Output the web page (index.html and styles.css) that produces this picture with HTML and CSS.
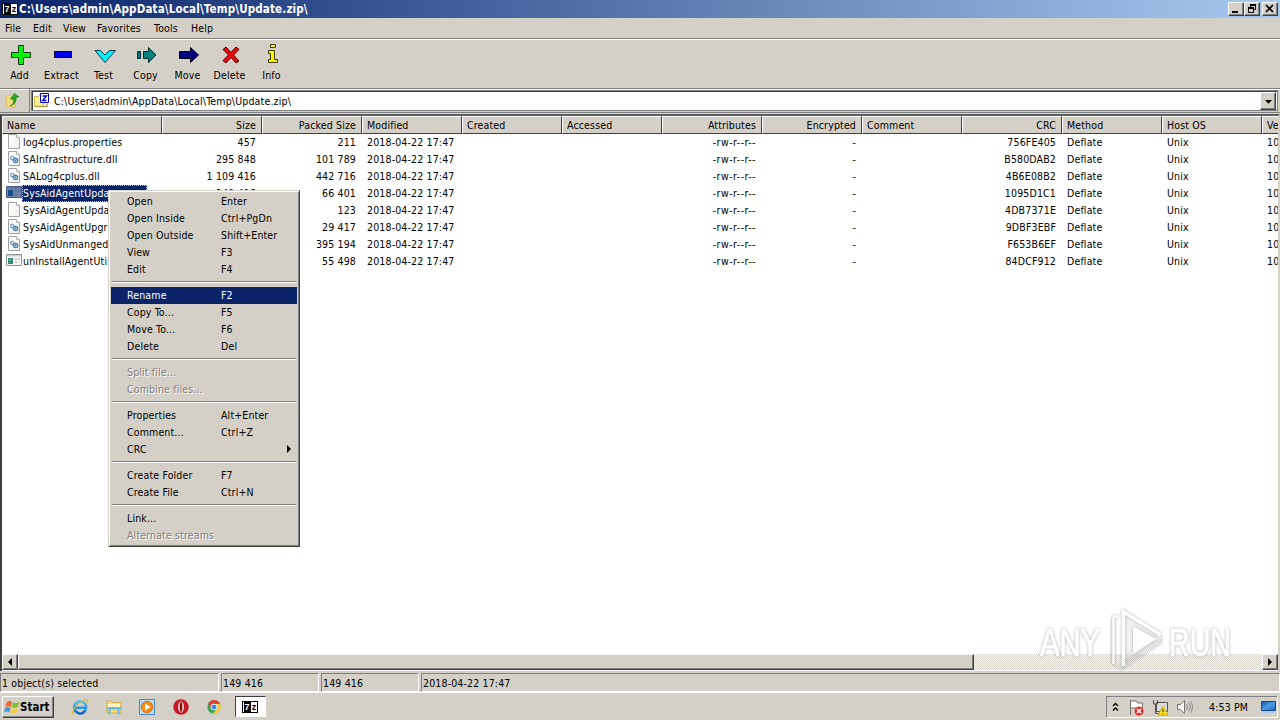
FILE: index.html
```html
<!DOCTYPE html>
<html lang="en">
<head>
<meta charset="utf-8">
<title>C:\Users\admin\AppData\Local\Temp\Update.zip\</title>
<link rel="stylesheet" href="styles.css">
</head>
<body>
<svg class="defs" width="0" height="0" aria-hidden="true">
  <defs>
    <linearGradient id="page" x1="0" y1="0" x2="1" y2="1"><stop offset="0" stop-color="#fff"/><stop offset="1" stop-color="#f0efe8"/></linearGradient>
    <linearGradient id="ie" x1="0" y1="0" x2="0" y2="1"><stop offset="0" stop-color="#55c3f5"/><stop offset="1" stop-color="#1268c4"/></linearGradient>
    <linearGradient id="desk" x1="0" y1="0" x2="1" y2="1"><stop offset="0" stop-color="#0f4fa8"/><stop offset=".5" stop-color="#4d9de6"/><stop offset="1" stop-color="#1b62bb"/></linearGradient>
    <symbol id="i-file" viewBox="0 0 16 16"><path d="M2.500.5h8l3 3v11h-11z" fill="url(#page)" stroke="#a4a4a2"/><path d="M10.500.5v3h3" fill="#fff" stroke="#b4b4b2"/></symbol>
    <symbol id="i-dll" viewBox="0 0 16 16"><path d="M2.500.5h8l3 3v11h-11z" fill="url(#page)" stroke="#9ca0a8"/><path d="M10.500.5v3h3" fill="#fff" stroke="#b4b4b2"/><circle cx="6.300" cy="7" r="1.800" fill="#dcecf8" stroke="#5c8ab6"/><circle cx="9.500" cy="9.500" r="2.200" fill="#c5def2" stroke="#4273a6" stroke-width="1.200"/><circle cx="9.500" cy="9.500" r=".7" fill="#285c91"/></symbol>
    <symbol id="i-exe" viewBox="0 0 16 16"><path d="M.5 1.500h15v11H.5z" fill="#f7f7f5" stroke="#8c9494"/><path d="M1 2h14v1.500H1z" fill="#cbd0d0"/><path d="M2 5h5v6H2z" fill="#368777"/><path d="M3 6h2v2H3z" fill="#6eb2a6"/><path d="M9 6h2M12 6h2M9 9h2" stroke="#9aa0a0"/></symbol>
    <symbol id="i-exe-sel" viewBox="0 0 16 16"><path d="M.5 1.500h15v11H.5z" fill="#7382a7" stroke="#4c5b82"/><path d="M1 2h14v1.500H1z" fill="#647396"/><path d="M2 5h5v6H2z" fill="#14518a"/><path d="M9 6h2M12 6h2M9 9h2" stroke="#455b91"/></symbol>
  </defs>
</svg>

<div class="window">
  <header class="titlebar">
    <span class="app-logo"><i>7</i>z</span>
    <h1 class="title">C:\Users\admin\AppData\Local\Temp\Update.zip\</h1>
    <div class="captions">
      <span class="cap"><svg width="14" height="12"><path d="M3 9h6" stroke="#000" stroke-width="2"/></svg></span>
      <span class="cap"><svg width="14" height="12"><path d="M5 2h6M3 5h6" stroke="#000" stroke-width="2"/><path d="M5.500 2v3M10.500 2v4.500H9M3.500 5v4.500h5V5" fill="none" stroke="#000"/></svg></span>
      <span class="cap cap-close"><svg width="14" height="12"><path d="M3 2l7 7M10 2L3 9" stroke="#000" stroke-width="1.700"/></svg></span>
    </div>
  </header>

  <nav class="menubar"><span class="m1">File</span><span class="m2">Edit</span><span class="m3">View</span><span class="m4">Favorites</span><span class="m5">Tools</span><span class="m6">Help</span></nav>

  <div class="toolbar">
    <div class="tool"><svg width="24" height="24"><path d="M9.500 2.500h5v7h7v5h-7v7h-5v-7h-7v-5h7z" fill="#00f800" stroke="#103810"/></svg><span>Add</span></div>
    <div class="tool"><svg width="24" height="24"><path d="M3.500 8.500h17v6h-17z" fill="#0000f0" stroke="#000030"/></svg><span>Extract</span></div>
    <div class="tool"><svg width="24" height="24"><path d="M2 7.500h5.500L12 12l4.500-4.500h6L12 19.500z" fill="#00f4ff" stroke="#063c4c"/></svg><span>Test</span></div>
    <div class="tool"><svg width="24" height="24"><path d="M2.500 8.500h3v7h-3zM8.500 8.500h5v-4l7.500 7.500-7.500 7.500v-4h-5z" fill="#008080" stroke="#002c2c"/></svg><span>Copy</span></div>
    <div class="tool"><svg width="24" height="24"><path d="M2.500 8.500h11v-4L21.500 12l-8 7.500v-4h-11z" fill="#000080" stroke="#000018"/></svg><span>Move</span></div>
    <div class="tool"><svg width="24" height="24"><path d="M4 6.500L7 4l5 5.500L17 4l3 2.500-5.500 5.500 5.500 6-3 2-5-5.500L7 20l-3-2.500L9.500 12z" fill="#f50808" stroke="#400"/></svg><span>Delete</span></div>
    <div class="tool"><svg width="24" height="24"><path d="M9.500 1.500h5v3h-5zM7.500 7.500h6v9h3v3h-9v-3h2v-6h-2z" fill="#fff200" stroke="#3c3800"/></svg><span>Info</span></div>
  </div>

  <div class="address">
    <span class="up"><svg width="16" height="16"><path d="M1 4l5-1 1 2 3 1v9l-8 1z" fill="#f4dc80" stroke="#d9bf6b"/><path d="M5 14c3-1 4-4 3.500-7H5.500L9.500 1.500 14 5h-3c.5 5-2 8-6 9z" fill="#34aa22" stroke="#187a16" stroke-width=".7"/></svg></span>
    <div class="combo">
      <svg width="18" height="18"><path d="M1.500 4.500h4l1-2h4v12h-9z" fill="#f6f08a" stroke="#c9bd5c"/><path d="M2 14.500h12v-3" fill="none" stroke="#b2a44a" stroke-width="1.500"/><path d="M7.500 1.500h8v9h-8z" fill="#fff" stroke="#0000a8"/><path d="M9.500 4h4l-4 4.500h4" fill="none" stroke="#0000c8" stroke-width="1.300"/></svg>
      <span class="path">C:\Users\admin\AppData\Local\Temp\Update.zip\</span>
      <span class="drop"><svg width="9" height="6"><path d="M1 1h7L4.500 4.800z"/></svg></span>
    </div>
  </div>

  <main class="list">
    <div class="grid head" id="head"></div>
    <div class="rows" id="rows"></div>
    <div class="scroll">
      <span class="sbtn"><svg width="6" height="8"><path d="M5 0v8L1 4z"/></svg></span>
      <span class="thumb"></span><span class="track"></span>
      <span class="sbtn"><svg width="6" height="8"><path d="M1 0v8l4-4z"/></svg></span>
    </div>
  </main>

  <footer class="status"><span class="s1">1 object(s) selected</span><span class="s2">149 416</span><span class="s3">149 416</span><span class="s4">2018-04-22 17:47</span></footer>
</div>

<div class="taskbar">
  <span class="start"><svg width="17" height="18" viewBox="0 0 19 18"><path d="M3 4c2-2 4-2 6-.5L7.500 9C5.500 7.500 3.500 8 1.500 9z" fill="#ed6a32"/><path d="M10 4c2 1.200 4 1 7-.5L15.500 9c-2.500 1.200-4.500 1.200-7 0z" fill="#83bd3c"/><path d="M1.300 10c2-1.200 4-1.200 6 0L6 15c-2-1.300-4-1-6 0z" fill="#4597db"/><path d="M8.300 10c2.500 1.200 4.500 1 7 0L14 15c-2.500 1.200-4.500 1-7 0z" fill="#fac936"/></svg><b>Start</b></span>
  <div class="launch">
    <svg width="18" height="18"><path d="M14.800 11.500A6 6 0 1 1 15 8v1.800H4.500" fill="none" stroke="url(#ie)" stroke-width="2.600"/><path d="M2.500 16.500C-2 14 10 1 16 1.500c1.500.3 1 2-.5 4" fill="none" stroke="#e7b52b" stroke-width="1.200"/></svg>
    <svg width="18" height="18"><path d="M2 3h5l1 1.500h8V15H2z" fill="#f5db78" stroke="#d3b24d"/><path d="M3 6h12v4H3z" fill="#fff6c4"/><path d="M4.500 16.500v-6h9v6M2 10h14" fill="none" stroke="#66b9e8" stroke-width="2"/></svg>
    <svg width="18" height="18"><path d="M1.500 1.500h15v15h-15z" fill="#b8d9f3" stroke="#4a8cc8"/><circle cx="9" cy="9" r="5.700" fill="#f28a1a" stroke="#d87212"/><path d="M7 5.500v7l5.500-3.500z" fill="#fff"/></svg>
    <svg width="18" height="18"><circle cx="9" cy="9" r="7.700" fill="#c51925"/><path d="M3 4a7.700 7.700 0 0 1 12 0" fill="none" stroke="#e96d6d"/><ellipse cx="9" cy="9" rx="2.800" ry="5.500" fill="#fff"/><ellipse cx="9" cy="9" rx="1.400" ry="5" fill="#8f0e18"/></svg>
    <svg width="18" height="18"><circle cx="9" cy="9" r="6.600" fill="#37a854"/><path d="M3.200 5.500A6.600 6.600 0 0 1 15 6H9L6 11z" fill="#df4235"/><path d="M15 6A6.600 6.600 0 0 1 8 15.600l4-5.100L11 6z" fill="#f7cb3a"/><circle cx="9" cy="9" r="3.300" fill="#fff"/><circle cx="9" cy="9" r="2.500" fill="#3f83e8"/></svg>
  </div>
  <span class="task"><span class="app-logo"><i>7</i>z</span></span>
  <div class="tray">
    <svg class="chev" width="7" height="10"><path d="M1 4l2.500-2.500L6 4M1 8.500L3.500 6 6 8.500" fill="none" stroke="#000" stroke-width="1.300"/></svg>
    <svg class="flag" width="17" height="17"><path d="M2.500 1v15M2.500 2h6l1 2h5v6H9l-1-1H2.500" fill="#fff" stroke="#74706a"/><circle cx="11" cy="12" r="4.500" fill="#e0312c"/><path d="M9 10l4 4m0-4l-4 4" stroke="#fff" stroke-width="1.600"/></svg>
    <svg class="net" width="17" height="17"><path d="M4.500 3.500h11v9h-11z" fill="#d9dcdc" stroke="#55534f"/><path d="M1.500 1v4h4V1M3.500 5v9.500H9" fill="none" stroke="#55534f"/><path d="M11 7l5 9H6z" fill="#ffe51d" stroke="#b59b00" stroke-width=".7"/><path d="M11 10v3M11 14v1" stroke="#222"/></svg>
    <svg class="vol" width="17" height="17"><path d="M1.500 5.500h3l4-4v13l-4-4h-3z" fill="#fff" stroke="#77736e"/><path d="M10.500 5q2 3 0 6M12.500 3.500q3.500 4.500 0 9M14.500 2q4 6 0 12" fill="none" stroke="#8d8984"/></svg>
    <time>4:53 PM</time>
    <svg class="desk" width="16" height="14"><path d="M.5 1.500h14v9H.5z" fill="url(#desk)" stroke="#17488d"/><path d="M1 12h13" stroke="#adc8e8" stroke-width="2"/></svg>
  </div>
</div>

<div class="context" id="context"></div>

<svg class="watermark" width="204" height="72" viewBox="0 0 204 72">
  <path d="M73 13l6-3v52l-6-4zM85 3l41 26v7L85 64z" fill="#999" fill-opacity=".16"/>
  <path d="M77 61l45-29 4 2v4L85 66z" fill="#aaa" fill-opacity=".25"/>
  <g class="glow">
    <path d="M81 10.500h-4.500V58" fill="none" stroke="#fff" stroke-width="2.500"/>
    <path d="M86.500 60V6L124 29" fill="none" stroke="#fff" stroke-width="3.500"/>
    <path d="M96 20l23 13-23 15z" fill="#fff"/>
    <text class="wm" x="3" y="50" textLength="60" lengthAdjust="spacingAndGlyphs">ANY</text>
    <text class="wm" x="132" y="50" textLength="62" lengthAdjust="spacingAndGlyphs">RUN</text>
  </g>
</svg>
<script src="app.js"></script>
</body>
</html>
```
FILE: styles.css
```css
* { box-sizing: border-box; }
body { margin: 0; width: 1280px; height: 720px; overflow: hidden; display: flex; flex-direction: column; background: #d4d0c8; color: #000; font: 10.5px/17px "DejaVu Sans Condensed", "DejaVu Sans", sans-serif; font-stretch: condensed; letter-spacing: .15px; white-space: pre; }
svg { display: block; flex: none; }
.defs { position: absolute; }
.window { height: 692px; display: flex; flex-direction: column; }
.titlebar { height: 18px; flex: none; display: flex; align-items: center; padding: 0 2px; background: linear-gradient(90deg, #0a246a, #a6caf0); }
.app-logo { display: flex; justify-content: center; width: 16px; height: 12px; border: 1px solid #000; background: #fff; color: #000; font: bold 9px/10px "Liberation Sans", sans-serif; }
.app-logo i { width: 7px; margin-right: 1px; background: #000; color: #fff; font-style: normal; text-align: center; }
.title { margin: 0 auto 0 1px; color: #fff; font-size: 11.5px; line-height: 17px; font-weight: bold; letter-spacing: .16px; }
.captions { display: flex; }
.cap { width: 16px; height: 14px; background: #d4d0c8; border: 1px solid; border-color: #fff #404040 #404040 #fff; box-shadow: inset -1px -1px #808080; }
.cap-close { margin-left: 2px; }
.menubar { height: 21px; flex: none; display: flex; padding: 2px 5px; border-bottom: 1px solid #808080; }
.m1 { width: 28px; } .m2 { width: 30px; } .m3 { width: 34px; } .m4 { width: 57px; } .m5 { width: 37px; }
.toolbar { height: 49px; flex: none; display: flex; padding-top: 3px; border-top: 1px solid #fff; }
.tool { width: 42px; display: flex; flex-direction: column; align-items: center; line-height: 16px; }
.tool span { margin-right: 3px; }
.address { height: 25px; flex: none; display: flex; border-top: 1px solid #808080; border-bottom: 1px solid #808080; box-shadow: inset 0 1px #fff; }
.up { width: 30px; padding: 3px 5px; border-right: 1px solid #808080; }
.combo { flex: 1; margin: 1px 2px 1px 1px; border: 1px solid #808080; box-shadow: inset 1px 1px #404040; background: #fff; display: flex; align-items: center; padding-left: 1px; }
.path { margin: 2px auto 0 3px; letter-spacing: .17px; }
.drop { width: 16px; height: 18px; margin-right: 1px; background: #d4d0c8; border: 1px solid; border-color: #fff #404040 #404040 #fff; box-shadow: inset -1px -1px #808080; padding: 6px 3px; }
.list { height: 557px; margin-top: 1px; flex: none; display: flex; flex-direction: column; background: #fff; border: solid #404040; border-width: 2px 2px 0 2px; border-top-color: #606060; border-right-color: #d4d0c8; overflow: hidden; }
.grid { display: grid; grid-template-columns: 160px repeat(12, 100px); width: 1360px; }
.head { height: 17px; flex: none; }
.head span { background: #d4d0c8; border: 1px solid; border-color: #fff #404040 #404040 #fff; padding: 0 5px 0 4px; line-height: 16px; }
.rows { flex: 1; padding-top: 1px; }
.rows .grid { height: 17px; }
.rows .grid > span { padding: 0 6px 0 5px; }
.rows .grid > span:nth-child(7) { letter-spacing: .48px; }
.grid .num { text-align: right; }
.rows .name { display: flex; padding: 0 0 0 4px !important; }
.name b { font-weight: normal; padding: 0 1px; }
.selected .name b { width: 125px; background: #0a246a; color: #fff; outline: 1px dotted #d8c078; outline-offset: -1px; }
.scroll { height: 16px; margin-bottom: 1px; flex: none; display: flex; }
.sbtn, .thumb { background: #d4d0c8; border: 1px solid; border-color: #fff #404040 #404040 #fff; box-shadow: inset -1px -1px #808080; }
.sbtn { width: 16px; padding: 3px 4px; }
.thumb { width: 956px; }
.track { flex: 1; background: repeating-conic-gradient(#fff 0 25%, #d4d0c8 0 50%) 0 0 / 2px 2px; }
.status { margin-top: 2px; height: 19px; flex: none; display: flex; gap: 2px; line-height: 18px; }
.status span { border: 1px solid; border-color: #808080 #fff #fff #808080; padding-left: 1px; }
.s1 { width: 219px; } .s2, .s3 { width: 98px; } .s4 { flex: 1; }
.taskbar { height: 28px; flex: none; border-top: 1px solid #fff; display: flex; padding-top: 3px; }
.start { width: 52px; height: 22px; margin-left: 2px; display: flex; align-items: center; border: 1px solid; border-color: #fff #404040 #404040 #fff; box-shadow: inset -1px -1px #808080; padding-left: 1px; }
.start b { font-size: 11.5px; letter-spacing: 0; margin-left: -1px; }
.launch { display: flex; gap: 15.5px; margin: 2px 11px 0 17px; }
.task { width: 31px; height: 21px; margin-left: 1px; background: #fff; border: 1px solid; border-color: #404040 #fff #fff #404040; padding: 4px 6px; }
.tray { margin: 0 2px 0 auto; width: 172px; height: 22px; border: 1px solid; border-color: #808080 #fff #fff #808080; display: flex; align-items: center; padding-left: 5px; }
.flag { margin-left: 9px; } .net { margin-left: 7px; } .vol { margin-left: 7px; }
.tray time { margin-left: 16px; } .desk { margin-left: auto; }
.context { position: absolute; left: 108px; top: 190px; width: 192px; height: 357px; background: #d4d0c8; border: 1px solid; border-color: #d4d0c8 #404040 #404040 #d4d0c8; box-shadow: inset 1px 1px #fff, inset -1px -1px #808080; padding: 2px; }
.item { height: 17px; display: grid; grid-template-columns: 94px 1fr; padding-left: 16px; }
.item.hot { background: #0a246a; color: #fff; }
.item.off { color: #808080; text-shadow: 1px 1px #fff; }
.item.sub { grid-template-columns: 94px 64px 1fr; }
.item.sub svg { margin: 4px 0 0 1px; }
.sep { height: 2px; margin: 3px 1px 4px; border-top: 1px solid #808080; border-bottom: 1px solid #fff; }
.watermark { position: absolute; left: 1037px; top: 606px; opacity: .85; }
.glow { filter: drop-shadow(0 0 1.5px rgba(0, 0, 0, .38)); }
.wm { font: 39px "Liberation Sans", sans-serif; letter-spacing: 0; fill: #fff; stroke: #fff; stroke-width: 1px; }
```
FILE: app.js
```js
const columns = [
  ["Name"], ["Size", 1], ["Packed Size", 1], ["Modified"], ["Created"], ["Accessed"],
  ["Attributes", 1], ["Encrypted", 1], ["Comment"], ["CRC", 1], ["Method"], ["Host OS"], ["Ve"]
];
const files = [
  ["file", "log4cplus.properties", "457", "211", "756FE405"],
  ["dll", "SAInfrastructure.dll", "295 848", "101 789", "B580DAB2"],
  ["dll", "SALog4cplus.dll", "1 109 416", "442 716", "4B6E08B2"],
  ["exe-sel", "SysAidAgentUpda", "149 416", "66 401", "1095D1C1"],
  ["file", "SysAidAgentUpda", "", "123", "4DB7371E"],
  ["dll", "SysAidAgentUpgr", "", "29 417", "9DBF3EBF"],
  ["dll", "SysAidUnmangedU", "", "395 194", "F653B6EF"],
  ["exe", "unInstallAgentUtil", "", "55 498", "84DCF912"]
];
const cell = (text, i) => `<span class="${columns[i][1] ? "num" : ""}">${text}</span>`;
document.getElementById("head").innerHTML = columns.map((c, i) => cell(c[0], i)).join("");
document.getElementById("rows").innerHTML = files.map(([icon, name, size, packed, crc]) => {
  const rest = [size, packed, "2018-04-22 17:47", "", "", "-rw-r--r--", "-", "", crc, "Deflate", "Unix", "10"];
  return `<div class="grid ${icon === "exe-sel" ? "selected" : ""}"><span class="name"><svg width="16" height="16"><use href="#i-${icon}"/></svg><b>${name}</b></span>${rest.map((t, i) => cell(t, i + 1)).join("")}</div>`;
}).join("");

const menu = [
  ["Open", "Enter"], ["Open Inside", "Ctrl+PgDn"], ["Open Outside", "Shift+Enter"], ["View", "F3"], ["Edit", "F4"], null,
  ["Rename", "F2", "hot"], ["Copy To...", "F5"], ["Move To...", "F6"], ["Delete", "Del"], null,
  ["Split file...", "", "off"], ["Combine files...", "", "off"], null,
  ["Properties", "Alt+Enter"], ["Comment...", "Ctrl+Z"], ["CRC", "", "sub"], null,
  ["Create Folder", "F7"], ["Create File", "Ctrl+N"], null,
  ["Link...", ""], ["Alternate streams", "", "off"]
];
document.getElementById("context").innerHTML = menu.map(m => m
  ? `<div class="item ${m[2] || ""}"><span>${m[0]}</span><span>${m[1]}</span>${m[2] === "sub" ? '<svg width="6" height="8"><path d="M1 0v8l4-4z"/></svg>' : ""}</div>`
  : '<div class="sep"></div>').join("");
```
